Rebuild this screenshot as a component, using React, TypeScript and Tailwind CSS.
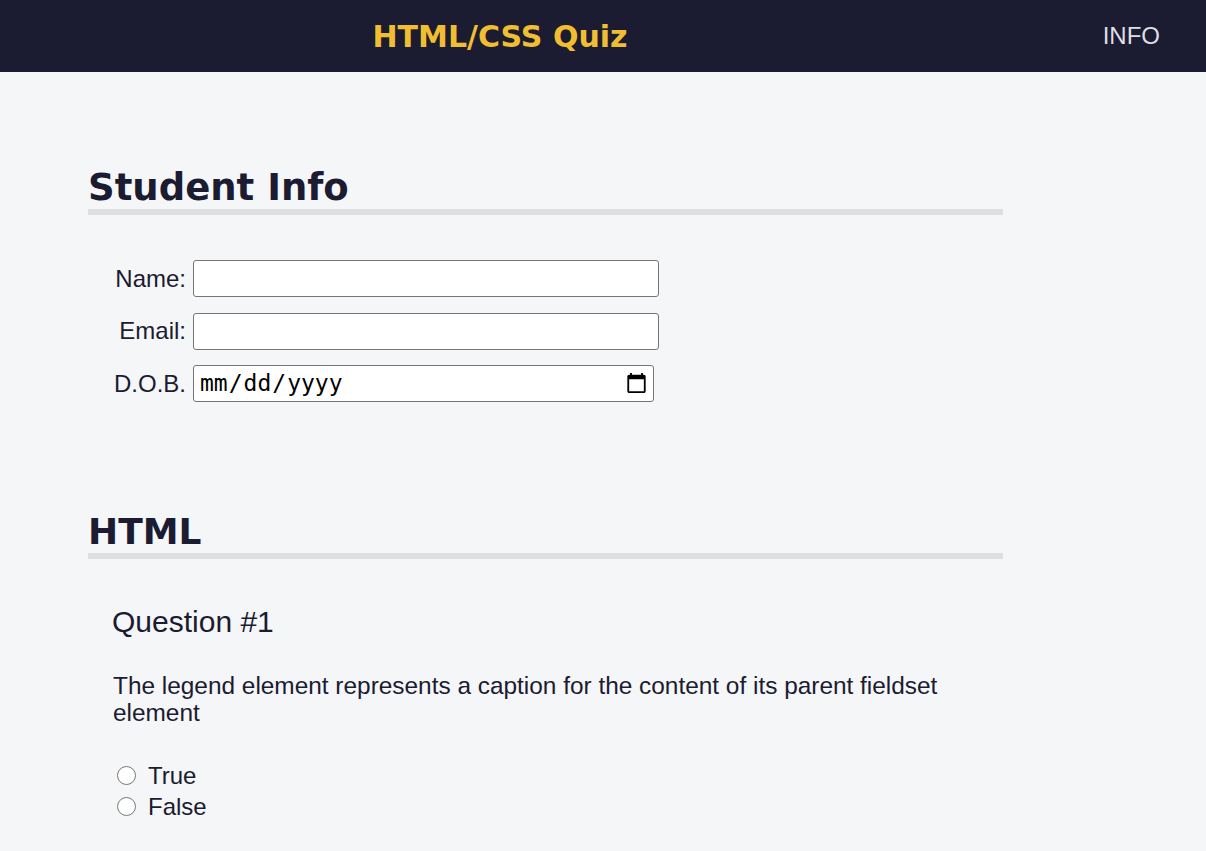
import React from "react";

export default function App() {
  const heading = "font-['DejaVu_Sans',Verdana,sans-serif]";
  const body = "font-['Liberation_Sans',Arial,sans-serif]";

  return (
    <div className={`min-h-[851px] bg-[#f5f6f7] text-[#1b1b32] ${body}`}>
      <header className="flex h-[72px] items-center bg-[#1b1b32]">
        <div className="w-[1000px] text-center">
          <h1 className={`${heading} text-[30px] font-bold text-[#f1be32]`}>
            HTML/CSS Quiz
          </h1>
        </div>
        <nav className="ml-auto mr-[46px] text-[24px] text-[#dfdfe2]">
          INFO
        </nav>
      </header>

      <main className="ml-[88px] w-[915px] pt-[95px]">
        <section>
          <h2
            className={`${heading} border-b-[6px] border-[#dfdfe2] text-[37px] leading-[42px] font-bold`}
          >
            Student Info
          </h2>
          <div className="mt-[45px] flex flex-col gap-[15.5px] text-[24px]">
            <div className="flex items-center">
              <label className="w-[105px] pr-[7px] text-right">Name:</label>
              <input
                type="text"
                className="h-[37px] w-[466px] rounded-[3px] border border-[#767676] bg-white"
              />
            </div>
            <div className="flex items-center">
              <label className="w-[105px] pr-[7px] text-right">Email:</label>
              <input
                type="email"
                className="h-[37px] w-[466px] rounded-[3px] border border-[#767676] bg-white"
              />
            </div>
            <div className="flex items-center">
              <label className="w-[105px] pr-[7px] text-right">D.O.B.</label>
              <input
                type="date"
                className="h-[37px] w-[461px] rounded-[3px] border border-[#767676] bg-white pl-[5px] pr-[3px] font-['DejaVu_Sans_Mono',monospace] text-[23px] text-black"
              />
            </div>
          </div>
        </section>

        <section className="mt-[109px]">
          <h2
            className={`${heading} border-b-[6px] border-[#dfdfe2] text-[36px] leading-[42px] font-bold`}
          >
            HTML
          </h2>
          <div className="pl-[24px]">
            <h3 className="mt-[46px] text-[30px] leading-[34px]">Question #1</h3>
            <p className="mt-[33px] w-[880px] pl-[1px] text-[24.4px] leading-[27px]">
              The legend element represents a caption for the content of its
              parent fieldset element
            </p>
            <div className="mt-[40px] flex flex-col gap-[12px] pl-[5px] text-[24px] leading-[19px]">
              <label className="flex items-center gap-[12px]">
                <input type="radio" name="q1" className="m-0 h-[19px] w-[19px]" />
                True
              </label>
              <label className="flex items-center gap-[12px]">
                <input type="radio" name="q1" className="m-0 h-[19px] w-[19px]" />
                False
              </label>
            </div>
          </div>
        </section>
      </main>
    </div>
  );
}
